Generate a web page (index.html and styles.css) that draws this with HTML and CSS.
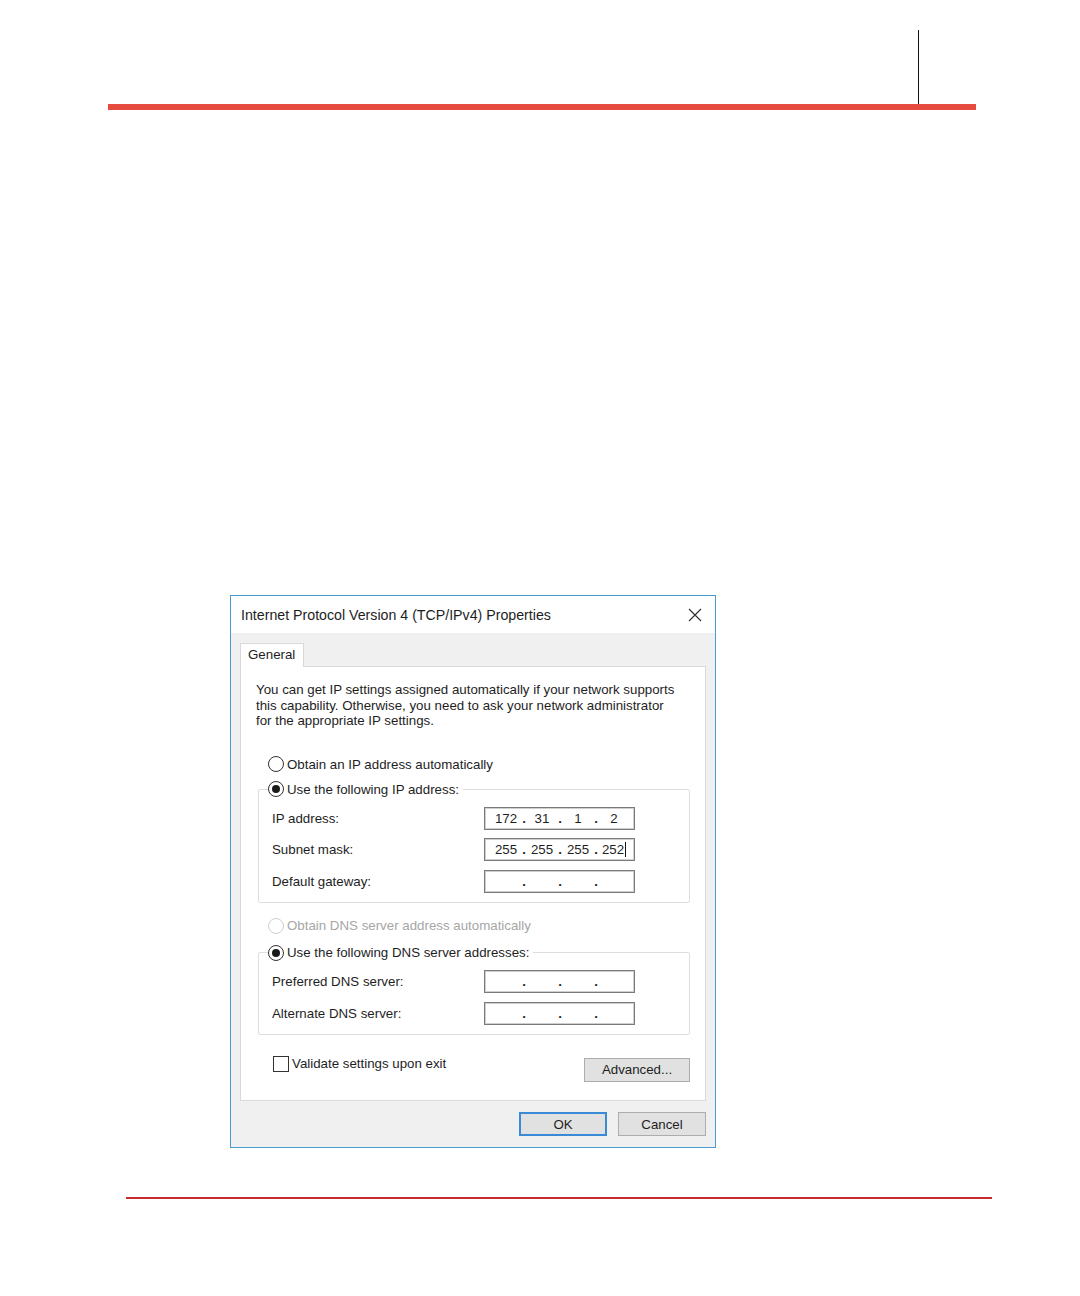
FILE: index.html
```html
<!DOCTYPE html>
<html lang="en">
<head>
    <meta charset="UTF-8">
    <title>Internet Protocol Version 4 (TCP/IPv4) Properties</title>
    <link rel="stylesheet" href="styles.css">
</head>
<body>
    <div class="top"><span class="top-mark"></span></div>

    <div class="dialog">
        <div class="titlebar">
            <span>Internet Protocol Version 4 (TCP/IPv4) Properties</span>
            <svg class="close" width="14" height="14" viewBox="0 0 14 14">
                <path d="M1 1 L13 13 M13 1 L1 13" stroke="#333" stroke-width="1.2" fill="none"/>
            </svg>
        </div>

        <div class="dlg-body">
            <div class="tabs"><span class="tab">General</span></div>

            <div class="panel">
                <p class="intro">You can get IP settings assigned automatically if your network supports<br>
                this capability. Otherwise, you need to ask your network administrator<br>
                for the appropriate IP settings.</p>

                <div class="opt"><span class="radio"></span>Obtain an IP address automatically</div>

                <fieldset class="group">
                    <legend><span class="radio on"></span>Use the following IP address:</legend>
                    <div class="field">
                        <span class="field-label">IP address:</span>
                        <div class="ipbox"><span class="seg">172</span><span class="dot">.</span><span class="seg">31</span><span class="dot">.</span><span class="seg">1</span><span class="dot">.</span><span class="seg">2</span></div>
                    </div>
                    <div class="field">
                        <span class="field-label">Subnet mask:</span>
                        <div class="ipbox"><span class="seg">255</span><span class="dot">.</span><span class="seg">255</span><span class="dot">.</span><span class="seg">255</span><span class="dot">.</span><span class="seg"><span class="caret">252</span></span></div>
                    </div>
                    <div class="field">
                        <span class="field-label">Default gateway:</span>
                        <div class="ipbox"><span class="seg"></span><span class="dot">.</span><span class="seg"></span><span class="dot">.</span><span class="seg"></span><span class="dot">.</span><span class="seg"></span></div>
                    </div>
                </fieldset>

                <div class="opt disabled"><span class="radio"></span>Obtain DNS server address automatically</div>

                <fieldset class="group">
                    <legend><span class="radio on"></span>Use the following DNS server addresses:</legend>
                    <div class="field">
                        <span class="field-label">Preferred DNS server:</span>
                        <div class="ipbox"><span class="seg"></span><span class="dot">.</span><span class="seg"></span><span class="dot">.</span><span class="seg"></span><span class="dot">.</span><span class="seg"></span></div>
                    </div>
                    <div class="field">
                        <span class="field-label">Alternate DNS server:</span>
                        <div class="ipbox"><span class="seg"></span><span class="dot">.</span><span class="seg"></span><span class="dot">.</span><span class="seg"></span><span class="dot">.</span><span class="seg"></span></div>
                    </div>
                </fieldset>

                <div class="bottom-row">
                    <div class="check"><span class="box"></span>Validate settings upon exit</div>
                    <button class="btn adv">Advanced...</button>
                </div>
            </div>

            <div class="actions">
                <button class="btn ok">OK</button>
                <button class="btn">Cancel</button>
            </div>
        </div>
    </div>

    <div class="foot"></div>
</body>
</html>
```

FILE: styles.css
```css
body {
    margin: 0;
    background: #fff;
    font-family: "Liberation Sans", Arial, sans-serif;
    color: #1e1e1e;
}
.top {
    margin-left: 108px;
    width: 868px;
    height: 104px;
    border-bottom: 6px solid #e64b40;
    display: flex;
    justify-content: flex-end;
}
.top-mark {
    margin-top: 30px;
    margin-right: 57px;
    width: 1px;
    background: #111;
}
.dialog {
    margin: 485px 0 0 230px;
    width: 486px;
    box-sizing: border-box;
    border: 1px solid #4a9ad0;
    background: #f0f0f0;
}
.titlebar {
    height: 37px;
    background: #fff;
    display: flex;
    align-items: center;
    justify-content: space-between;
    padding: 0 13px 0 10px;
    font-size: 14.2px;
    color: #1e1e1e;
}
.close {
    display: block;
}
.dlg-body {
    padding: 10px 9px 11px 9px;
    font-size: 13.3px;
}
.tabs {
    display: flex;
}
.tab {
    height: 23px;
    line-height: 22px;
    padding: 0 8px 0 7px;
    background: #fff;
    border: 1px solid #d9d9d9;
    border-bottom: none;
    margin-bottom: -1px;
    position: relative;
    z-index: 1;
}
.panel {
    background: #fff;
    border: 1px solid #d9d9d9;
    padding: 15px 15px 18.5px 15px;
}
.intro {
    margin: 0;
    line-height: 15.5px;
}
.opt {
    display: flex;
    align-items: center;
    height: 18px;
    margin: 26.5px 0 7px 12px;
}
.opt.disabled {
    color: #a6a6a6;
    margin: 14px 0 9px 12px;
}
.radio {
    width: 14px;
    height: 14px;
    border: 1px solid #333;
    border-radius: 50%;
    margin-right: 3px;
    display: inline-flex;
    align-items: center;
    justify-content: center;
    flex-shrink: 0;
    background: #fff;
}
.radio.on::after {
    content: "";
    width: 8px;
    height: 8px;
    border-radius: 50%;
    background: #1a1a1a;
}
.disabled .radio {
    border-color: #cfcfcf;
}
.group {
    margin: 0 0 0 2px;
    padding: 0 13px 9px 13px;
    border: 1px solid #dedede;
    border-radius: 2px;
    min-width: 0;
}
.group legend {
    display: flex;
    align-items: center;
    height: 18px;
    padding: 0 4px 0 0;
    margin-left: -4px;
}
.field {
    display: flex;
    align-items: center;
    margin-top: 8.5px;
}
.field-label {
    width: 212px;
}
.ipbox {
    width: 151px;
    height: 23px;
    box-sizing: border-box;
    border: 1px solid #7a7a7a;
    box-shadow: inset 0 0 0 1px #cfcfcf;
    display: flex;
    align-items: center;
    padding-left: 5px;
}
.seg {
    width: 32px;
    text-align: center;
}
.dot {
    width: 4px;
    text-align: center;
    font-weight: bold;
}
.caret {
    border-right: 1px solid #111;
    padding-right: 1px;
}
.bottom-row {
    display: flex;
    justify-content: space-between;
    align-items: flex-start;
    margin: 21px 0 0 17px;
}
.check {
    display: flex;
    align-items: center;
    height: 16px;
}
.box {
    width: 14px;
    height: 14px;
    border: 1px solid #333;
    margin-right: 3px;
    background: #fff;
}
.btn {
    font-family: "Liberation Sans", Arial, sans-serif;
    font-size: 13.3px;
    color: #1e1e1e;
    background: #e1e1e1;
    border: 1px solid #adadad;
    height: 24px;
    padding: 0;
    box-sizing: border-box;
}
.adv {
    width: 106px;
    margin-top: 2px;
}
.actions {
    display: flex;
    justify-content: flex-end;
    gap: 11px;
    margin-top: 11px;
}
.actions .btn {
    width: 88px;
}
.btn.ok {
    border: 2px solid #3a8ad6;
}
.foot {
    margin: 49px 0 0 126px;
    width: 866px;
    border-top: 2px solid #c52b30;
}
```
